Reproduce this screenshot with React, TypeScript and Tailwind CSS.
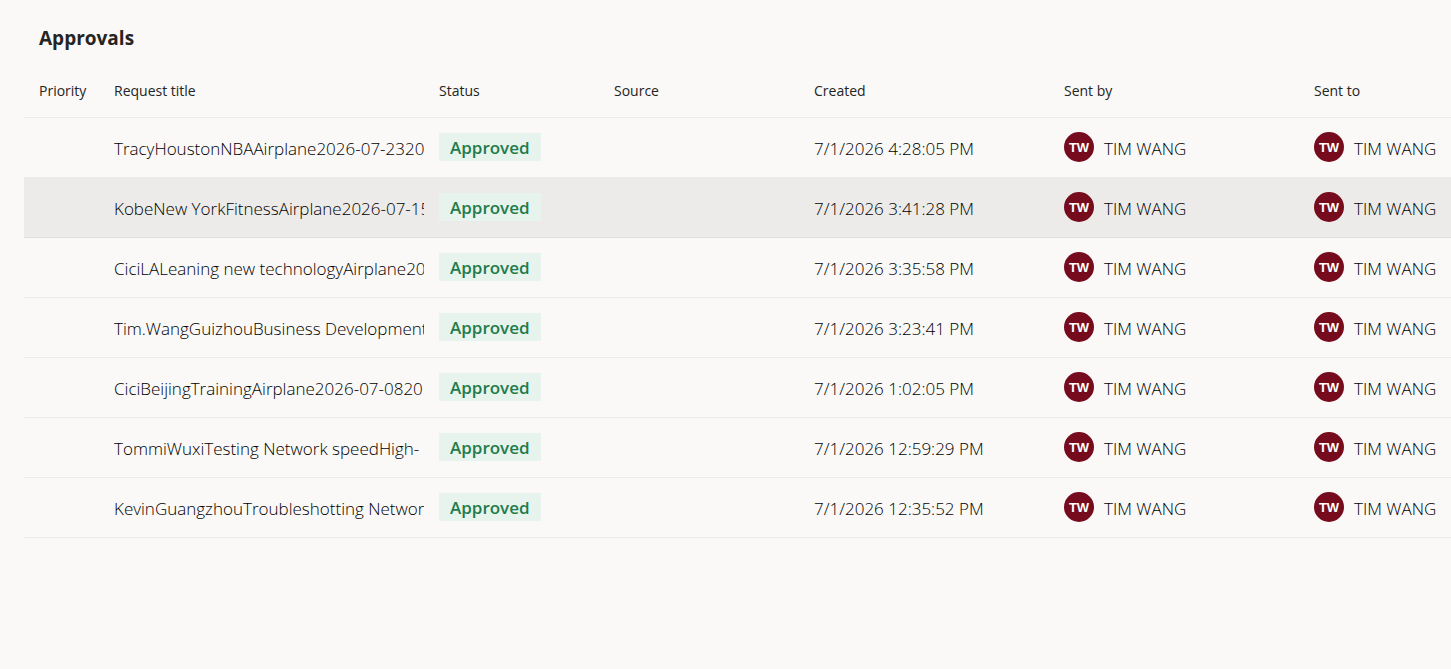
import React from "react";
import { clsx } from "clsx";

interface Approval {
  title: string;
  status: string;
  source: string;
  created: string;
  sentBy: string;
  sentTo: string;
}

const columns = [
  { label: "Priority", width: "w-[75px]" },
  { label: "Request title", width: "w-[325px]" },
  { label: "Status", width: "w-[175px]" },
  { label: "Source", width: "w-[200px]" },
  { label: "Created", width: "w-[250px]" },
  { label: "Sent by", width: "w-[250px]" },
  { label: "Sent to", width: "w-[250px]" },
];

const approvals: Approval[] = [
  {
    title: "TracyHoustonNBAAirplane2026-07-2320",
    status: "Approved",
    source: "",
    created: "7/1/2026 4:28:05 PM",
    sentBy: "TIM WANG",
    sentTo: "TIM WANG",
  },
  {
    title: "KobeNew YorkFitnessAirplane2026-07-15",
    status: "Approved",
    source: "",
    created: "7/1/2026 3:41:28 PM",
    sentBy: "TIM WANG",
    sentTo: "TIM WANG",
  },
  {
    title: "CiciLALeaning new technologyAirplane20",
    status: "Approved",
    source: "",
    created: "7/1/2026 3:35:58 PM",
    sentBy: "TIM WANG",
    sentTo: "TIM WANG",
  },
  {
    title: "Tim.WangGuizhouBusiness Development",
    status: "Approved",
    source: "",
    created: "7/1/2026 3:23:41 PM",
    sentBy: "TIM WANG",
    sentTo: "TIM WANG",
  },
  {
    title: "CiciBeijingTrainingAirplane2026-07-0820",
    status: "Approved",
    source: "",
    created: "7/1/2026 1:02:05 PM",
    sentBy: "TIM WANG",
    sentTo: "TIM WANG",
  },
  {
    title: "TommiWuxiTesting Network speedHigh-",
    status: "Approved",
    source: "",
    created: "7/1/2026 12:59:29 PM",
    sentBy: "TIM WANG",
    sentTo: "TIM WANG",
  },
  {
    title: "KevinGuangzhouTroubleshotting Networ",
    status: "Approved",
    source: "",
    created: "7/1/2026 12:35:52 PM",
    sentBy: "TIM WANG",
    sentTo: "TIM WANG",
  },
];

const getInitials = (name: string) =>
  name
    .split(" ")
    .map((part) => part[0])
    .join("");

function Person({ name }: { name: string }) {
  return (
    <div className="flex items-center gap-2.5">
      <span className="flex size-[30px] shrink-0 items-center justify-center rounded-full bg-[#750b1c] pt-px font-['Liberation_Sans',sans-serif] text-[13px] font-bold text-white">
        {getInitials(name)}
      </span>
      <span className="pt-[3px] whitespace-nowrap">{name}</span>
    </div>
  );
}

export default function App() {
  const [selected, setSelected] = React.useState(1);

  return (
    <main className="min-h-screen bg-[#faf9f8] pl-6 font-['Open_Sans','Noto_Sans',sans-serif] text-[#252423]">
      <h1 className="px-[15px] pt-6 text-[19px] leading-7 font-bold">
        Approvals
      </h1>

      <div className="mt-3 overflow-x-auto [scrollbar-width:none]">
        <table className="w-full min-w-[1525px] table-fixed border-collapse text-left">
          <thead>
            <tr className="h-[53px] border-b border-[#edebe9]">
              {columns.map((column) => (
                <th
                  key={column.label}
                  scope="col"
                  className={clsx(
                    "pl-[15px] text-[14px] font-normal whitespace-nowrap",
                    column.width,
                  )}
                >
                  {column.label}
                </th>
              ))}
            </tr>
          </thead>
          <tbody className="text-[17px] leading-6 font-light text-black">
            {approvals.map((approval, index) => (
              <tr
                key={approval.title}
                onClick={() => setSelected(index)}
                className={clsx(
                  "h-[60px] cursor-pointer border-b",
                  index === selected
                    ? "border-[#e1dfdd] bg-[#edebe9]"
                    : "border-[#edebe9]",
                )}
              >
                <td />
                <td className="pt-[3px] pl-[15px]">
                  <div className="overflow-hidden whitespace-nowrap">
                    {approval.title}
                  </div>
                </td>
                <td className="pl-[15px]">
                  <span className="inline-block bg-[#e6f4ed] px-[11px] pt-[3px] pb-px align-middle font-semibold text-[#237b4b]">
                    {approval.status}
                  </span>
                </td>
                <td className="pl-[15px]">{approval.source}</td>
                <td className="pt-[3px] pl-[15px] whitespace-nowrap">
                  {approval.created}
                </td>
                <td className="pl-[15px]">
                  <Person name={approval.sentBy} />
                </td>
                <td className="pl-[15px]">
                  <Person name={approval.sentTo} />
                </td>
              </tr>
            ))}
          </tbody>
        </table>
      </div>
    </main>
  );
}
